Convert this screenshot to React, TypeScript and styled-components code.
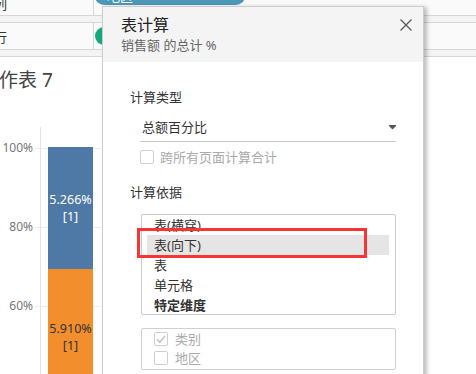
import styled, { createGlobalStyle } from "styled-components";

const GlobalStyle = createGlobalStyle`
  html, body {
    margin: 0;
    padding: 0;
  }
  body {
    width: 476px;
    height: 374px;
    overflow: hidden;
    background: #fff;
    font-family: "Noto Sans", "Noto Sans CJK SC", sans-serif;
    color: #333;
  }
`;

// chart scale: 100% sits at 20.5px from the top of the plot, 3.95px per percent
const yOf = (v: number) => 20.5 + (100 - v) * 3.95;

const ticks = [100, 80, 60];

const segments = [
  { from: 100, to: 69.24, color: "#4e79a7", text: "#fff", label: "5.266%" },
  { from: 69.24, to: 34.6, color: "#f28e2b", text: "#333", label: "5.910%" },
];

const listItems = ["表(横穿)", "表(向下)", "表", "单元格", "特定维度"];

export default function App() {
  return (
    <Page>
      <GlobalStyle />
      <Shelves>
        <ShelfRow $first>
          <ShelfLabel>列</ShelfLabel>
          <Pill $color="#4d97b7" $top>
            地区
          </Pill>
        </ShelfRow>
        <ShelfRow>
          <ShelfLabel>行</ShelfLabel>
          <Pill $color="#16a97b" />
        </ShelfRow>
      </Shelves>

      <SheetTitle>工作表 7</SheetTitle>

      <Chart>
        <Axis>
          {ticks.map((t) => (
            <TickLabel key={t} style={{ top: yOf(t) - 8 }}>
              {t}%
            </TickLabel>
          ))}
        </Axis>
        <Plot>
          {ticks.map((t) => (
            <GridLine key={t} style={{ top: Math.round(yOf(t)) }} />
          ))}
          <Bar style={{ marginTop: yOf(100) - 0.5 }}>
            {segments.map((s) => (
              <Segment
                key={s.label}
                $color={s.color}
                $text={s.text}
                style={{ height: (s.from - s.to) * 3.95 }}
              >
                <span>{s.label}</span>
                <span>[1]</span>
              </Segment>
            ))}
          </Bar>
        </Plot>
      </Chart>

      <Dialog>
        <Header>
          <div>
            <Title>表计算</Title>
            <Subtitle>销售额 的总计 %</Subtitle>
          </div>
          <CloseButton aria-label="关闭">
            <svg width="12" height="12" viewBox="0 0 12 12">
              <path d="M0.5 0.5 L11.5 11.5 M11.5 0.5 L0.5 11.5" stroke="#555" strokeWidth="1.2" />
            </svg>
          </CloseButton>
        </Header>

        <Body>
          <SectionLabel $top={26}>计算类型</SectionLabel>
          <Dropdown>
            <span>总额百分比</span>
            <svg width="7" height="5" viewBox="0 0 7 5">
              <path d="M0 0 H7 V1 L3.5 4.5 L0 1 Z" fill="#555" />
            </svg>
          </Dropdown>
          <CheckRow>
            <CheckBox />
            <CheckLabel>跨所有页面计算合计</CheckLabel>
          </CheckRow>

          <SectionLabel $top={19}>计算依据</SectionLabel>
          <ListBox>
            {listItems.map((item, i) => (
              <ListItem key={item} $selected={i === 1} $bold={i === 4}>
                {item}
              </ListItem>
            ))}
          </ListBox>

          <DimBox>
            <CheckRow $inset>
              <CheckBox>
                <svg width="12" height="12" viewBox="0 0 12 12">
                  <path d="M2 6.5 L4.8 9.2 L10 2.8" stroke="#bbb" strokeWidth="1.3" fill="none" />
                </svg>
              </CheckBox>
              <CheckLabel>类别</CheckLabel>
            </CheckRow>
            <CheckRow $inset>
              <CheckBox />
              <CheckLabel>地区</CheckLabel>
            </CheckRow>
          </DimBox>
        </Body>

        <Highlight />
      </Dialog>
    </Page>
  );
}

const Page = styled.div`
  position: relative;
  width: 476px;
  height: 374px;
  overflow: hidden;
`;

const Shelves = styled.div`
  display: flex;
  flex-direction: column;
  gap: 6px;
  padding-bottom: 6px;
  background: #f4f4f4;
  border-bottom: 1px solid #d6d6d6;
`;

const ShelfRow = styled.div<{ $first?: boolean }>`
  display: flex;
  align-items: center;
  height: ${(p) => (p.$first ? "23px" : "26px")};
  margin-top: ${(p) => (p.$first ? "-8px" : "0")};
  background: #fafafa;
  border-top: ${(p) => (p.$first ? "none" : "1px solid #d6d6d6")};
  border-bottom: 1px solid #d6d6d6;
`;

const ShelfLabel = styled.div`
  box-sizing: border-box;
  width: 94px;
  height: 100%;
  display: flex;
  align-items: center;
  text-indent: -6px;
  border-right: 1px solid #d6d6d6;
  font-size: 13px;
  color: #333;
  margin-right: 1px;
`;

const Pill = styled.div<{ $color: string; $top?: boolean }>`
  box-sizing: border-box;
  width: 150px;
  height: 18px;
  border-radius: 9px;
  padding-left: 12px;
  background: ${(p) => p.$color};
  color: #fff;
  font-size: 13px;
  line-height: 18px;
  align-self: ${(p) => (p.$top ? "flex-start" : "center")};
  margin-top: ${(p) => (p.$top ? "-5px" : "0")};
`;

const SheetTitle = styled.div`
  margin: 10px 0 0 -20px;
  font-size: 19px;
  line-height: 26px;
  color: #444;
`;

const Chart = styled.div`
  display: flex;
  margin-top: 34px;
  height: 247px;
`;

const Axis = styled.div`
  position: relative;
  width: 40px;
  border-right: 1px solid #e4e4e4;
`;

const TickLabel = styled.div`
  position: absolute;
  right: 7px;
  font-size: 12px;
  line-height: 16px;
  color: #777;
`;

const Plot = styled.div`
  position: relative;
  flex: 1;
`;

const GridLine = styled.div`
  position: absolute;
  left: -6px;
  width: 66px;
  height: 1px;
  background: #ececec;
`;

const Bar = styled.div`
  position: relative;
  display: flex;
  flex-direction: column;
  width: 45px;
  margin-left: 7px;
`;

const Segment = styled.div<{ $color: string; $text: string }>`
  display: flex;
  flex-direction: column;
  align-items: center;
  justify-content: center;
  background: ${(p) => p.$color};
  color: ${(p) => p.$text};
  font-size: 12.5px;
  line-height: 17px;
`;

const Dialog = styled.div`
  position: absolute;
  left: 102px;
  top: 6px;
  box-sizing: border-box;
  width: 322px;
  height: 420px;
  background: #fff;
  border: 1px solid #cdcdcd;
  box-shadow: 3px 1px 4px rgba(0, 0, 0, 0.25);
`;

const Header = styled.div`
  display: flex;
  justify-content: space-between;
  align-items: flex-start;
  padding: 7px 11px 8px 18px;
  background: #f4f4f4;
`;

const Title = styled.div`
  font-size: 16px;
  line-height: 22px;
  color: #222;
`;

const Subtitle = styled.div`
  font-size: 13px;
  line-height: 18px;
  color: #666;
`;

const CloseButton = styled.button`
  display: flex;
  width: 12px;
  height: 12px;
  margin-top: 5px;
  padding: 0;
  border: 0;
  background: none;
`;

const Body = styled.div`
  display: flex;
  flex-direction: column;
  align-items: flex-start;
  padding-left: 27px;
`;

const SectionLabel = styled.div<{ $top: number }>`
  margin-top: ${(p) => p.$top}px;
  font-size: 13px;
  line-height: 18px;
  color: #333;
`;

const Dropdown = styled.div`
  box-sizing: border-box;
  display: flex;
  justify-content: space-between;
  align-items: center;
  width: 256px;
  height: 25px;
  margin: 11px 0 0 10px;
  padding: 0 0 4px 2px;
  border-bottom: 1px solid #c8c8c8;
  font-size: 13px;
  line-height: 20px;
  color: #333;
`;

const CheckRow = styled.div<{ $inset?: boolean }>`
  display: flex;
  align-items: center;
  gap: ${(p) => (p.$inset ? "7px" : "6px")};
  height: 14px;
  margin: ${(p) => (p.$inset ? "0" : "8px 0 0 10px")};
`;

const CheckBox = styled.div`
  box-sizing: border-box;
  display: flex;
  align-items: center;
  justify-content: center;
  width: 14px;
  height: 14px;
  border: 1px solid #cfcfcf;
  border-radius: 2px;
  background: #fff;
`;

const CheckLabel = styled.span`
  font-size: 13px;
  line-height: 14px;
  color: #aaa;
`;

const ListBox = styled.div`
  box-sizing: border-box;
  width: 255px;
  height: 101px;
  margin: 13px 0 0 11px;
  padding: 0 6px 0 5px;
  border: 1px solid #cbcbcb;
  border-radius: 2px;
  overflow: hidden;
`;

const ListItem = styled.div<{ $selected?: boolean; $bold?: boolean }>`
  height: 20px;
  padding-left: 7px;
  font-size: 13px;
  line-height: 20px;
  font-weight: ${(p) => (p.$bold ? 700 : 400)};
  color: #333;
  background: ${(p) => (p.$selected ? "#e5e5e5" : "transparent")};
`;

const DimBox = styled.div`
  box-sizing: border-box;
  display: flex;
  flex-direction: column;
  gap: 5px;
  width: 255px;
  height: 42px;
  margin: 13px 0 0 11px;
  padding: 3px 0 0 12px;
  border: 1px solid #d0d0d0;
  border-radius: 2px;
`;

const Highlight = styled.div`
  position: absolute;
  left: 34px;
  top: 221px;
  box-sizing: border-box;
  width: 230px;
  height: 30px;
  border: 3px solid #f83535;
  pointer-events: none;
`;
